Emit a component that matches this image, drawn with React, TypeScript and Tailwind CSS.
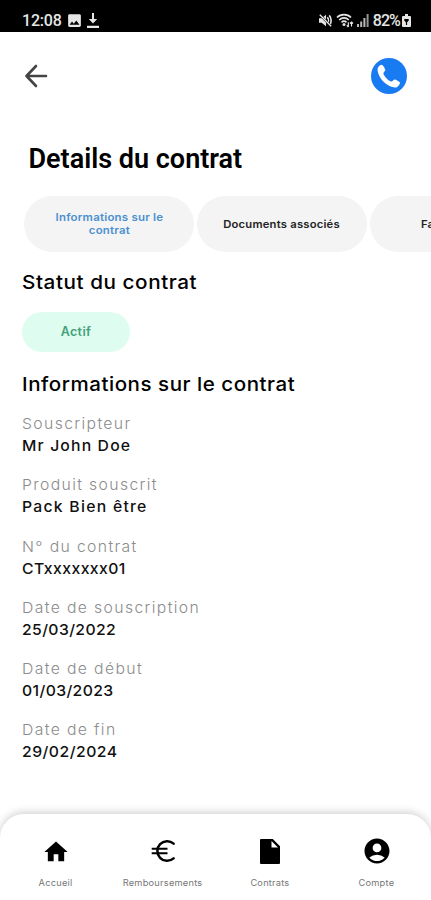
import React from 'react';
import {
  MdAccountCircle,
  MdHome,
  MdImage,
} from 'react-icons/md';

const details = [
  { label: 'Souscripteur', value: 'Mr John Doe', spacing: 'tracking-[1.1px]' },
  { label: 'Produit souscrit', value: 'Pack Bien être', spacing: 'tracking-[1.2px]' },
  { label: 'N° du contrat', value: 'CTxxxxxxx01', spacing: 'tracking-[0.4px]' },
  { label: 'Date de souscription', value: '25/03/2022', spacing: 'tracking-[0.35px]' },
  { label: 'Date de début', value: '01/03/2023', spacing: 'tracking-[0.35px]' },
  { label: 'Date de fin', value: '29/02/2024', spacing: 'tracking-[0.45px]' },
];

const EuroIcon: React.FC = () => (
  <svg width="24" height="24" viewBox="0 0 24 24" fill="none" stroke="currentColor" strokeWidth="2.5">
    <path d="M22.6 4.6A9.8 9.8 0 1 0 22.6 19.4" strokeLinecap="round" />
    <path d="M.7 9.800H16.500M.7 14.300H16.500" strokeWidth="2.1" />
  </svg>
);

const DocumentIcon: React.FC = () => (
  <svg width="20" height="25" viewBox="0 0 20 25" fill="currentColor">
    <path fillRule="evenodd" d="M1 0h11.800L20 7.200V24a1 1 0 0 1-1 1H1a1 1 0 0 1-1-1V1a1 1 0 0 1 1-1zM11.500 2v6.600H18z" />
  </svg>
);

const navItems = [
  { name: 'Accueil', icon: <MdHome size={28} className="mt-[2px]" /> },
  { name: 'Remboursements', icon: <EuroIcon /> },
  { name: 'Contrats', icon: <DocumentIcon /> },
  { name: 'Compte', icon: <MdAccountCircle size={30} /> },
];

const MutedIcon: React.FC = () => (
  <svg width="13" height="13" viewBox="0 0 13 13" fill="currentColor" className="mr-[4px]">
    <path d="M0 4.200h2.600L7 .8v11.400L2.600 8.800H0z" />
    <path d="M8.300 3.200c1.600 1.800 1.600 4.800 0 6.600M10.200 1.400c2.600 2.800 2.600 7.400 0 10.200" fill="none" stroke="currentColor" strokeWidth="1.6" />
    <path d="M.8.8l11.400 11.400" stroke="#000" strokeWidth="2.2" />
    <path d="M.8.8l11.400 11.400" stroke="currentColor" strokeWidth="1.3" />
  </svg>
);

const WifiIcon: React.FC = () => (
  <svg width="18" height="15" viewBox="0 0 18 15" fill="none" stroke="currentColor" strokeWidth="1.6">
    <path d="M1 4.500C4.500.6 11.500.6 15 4.500M3.200 7c2.800-2.800 6.800-2.800 9.600 0M5.500 9.300c1.500-1.400 3.500-1.400 5 0" />
    <circle cx="8" cy="11.500" r="1.500" fill="currentColor" stroke="none" />
    <path d="M12.300 14V9.200M10.800 12.300l1.500 1.700M15.500 13.500V9M14 10.500L15.500 9l1.500 1.500" strokeWidth="1.200" />
  </svg>
);

const SignalIcon: React.FC = () => (
  <svg width="12" height="13" viewBox="0 0 12 13" fill="currentColor">
    <path d="M0 10h2v3H0zM3.200 7.500h2V13h-2zM6.400 4h2v9h-2z" opacity=".8" />
    <path d="M9.600 0h2v13h-2z" opacity=".65" />
  </svg>
);

const BatteryIcon: React.FC = () => (
  <svg width="9" height="13" viewBox="0 0 9 13" fill="currentColor">
    <path fillRule="evenodd" d="M3 0h3v2h2a1 1 0 0 1 1 1v9a1 1 0 0 1-1 1H1a1 1 0 0 1-1-1V3a1 1 0 0 1 1-1h2zM2.300 5v1.700l1.600 1.500V11h1.200V8.200l1.600-1.500V5z" />
  </svg>
);

const StatusBar: React.FC = () => (
  <div className="flex h-8 items-start justify-between bg-black pl-[22px] pr-5 pt-[11px] text-[#e6e6e6]">
    <div className="flex h-[19px] items-center font-[Roboto,sans-serif] text-[16px] font-medium">
      <span className="w-[44px] whitespace-nowrap tracking-[-0.2px]">12:08</span>
      <MdImage size={17} />
      <svg width="12" height="15" viewBox="0 0 12 15" className="ml-[4px]" fill="currentColor">
        <path d="M5 0h2v6h3.200L6 10.500 1.800 6H5zM0 12.800h12V15H0z" />
      </svg>
    </div>
    <div className="flex h-[19px] items-center font-[Roboto,sans-serif] text-[16px] font-medium">
      <MutedIcon />
      <WifiIcon />
      <span className="ml-[3px] mr-[4px]"><SignalIcon /></span>
      <span className="mr-[2px] tracking-[-0.9px]">82%</span>
      <BatteryIcon />
    </div>
  </div>
);

const Tabs: React.FC = () => (
  <div className="mt-[21px] flex gap-[3px] overflow-hidden pl-6 text-[10.5px] font-semibold leading-[13px] text-[#222]">
    <button className="h-[56px] w-[170px] shrink-0 rounded-[28px] bg-[#f4f4f4] text-center text-[#4a90d0]">
      <span className="inline-block scale-x-[1.09] tracking-[0.2px]">
        Informations sur le
        <br />
        contrat
      </span>
    </button>
    <button className="h-[56px] w-[170px] shrink-0 rounded-[28px] bg-[#f4f4f4]">
      <span className="inline-block scale-x-[1.07] tracking-[0.2px]">Documents associés</span>
    </button>
    <button className="h-[56px] w-[170px] shrink-0 rounded-[28px] bg-[#f4f4f4] pl-[51px] text-left">
      <span className="inline-block origin-left scale-x-[1.07] tracking-[0.2px]">Factures</span>
    </button>
  </div>
);

const App: React.FC = () => {
  return (
    <div className="flex h-[900px] w-[431px] flex-col overflow-hidden bg-white font-[Inter,'Open_Sans',sans-serif] text-black">
      <StatusBar />

      <header className="flex h-[88px] items-center justify-between pl-[20px] pr-6 text-[#444]">
        <svg width="30" height="30" viewBox="0 0 30 30" fill="none" stroke="currentColor" strokeWidth="2.6" strokeLinecap="round" strokeLinejoin="round">
          <path d="M26 15H6.500M16 5L6.500 15l9.500 10" />
        </svg>
        <svg width="36" height="36" viewBox="0 0 36 36">
          <circle cx="18" cy="18" r="18" fill="#187bf2" />
          <path
            d="M7.200 9.200c1.200-1.600 3-2.500 4-2.300.8.2 2.900 3.700 3.100 4.900.2 1.300-2 2.200-1.900 3.700.2 2.300 4.900 7.300 7.500 8 1.600.4 2.500-1.900 3.800-1.900 1.300.1 4.900 2.100 5.200 3 .3 1-1 3.300-2.700 4.300-2.600 1.500-8.800-.3-13.400-4.900C8.200 19.400 5.200 12.200 7.200 9.200z"
            fill="#fff"
          />
        </svg>
      </header>

      <h1 className="mt-[23px] pl-[28.5px] font-[Roboto,sans-serif] text-[27px] font-semibold leading-8">
        Details du contrat
      </h1>

      <Tabs />

      <main className="flex-1 pl-[22px]">
        <h2 className="mt-[19px] origin-left scale-x-[1.09] text-[19px] font-medium leading-6 tracking-[0.5px]">Statut du contrat</h2>
        <div className="mt-[17px] flex h-10 w-[108px] items-center justify-center rounded-[20px] bg-[#defdf0] pt-px text-[12.5px] font-semibold tracking-[0.4px] text-[#43a07a]">
          Actif
        </div>
        <h2 className="mt-[21px] origin-left scale-x-[1.08] text-[19px] font-medium leading-6 tracking-[0.5px]">
          Informations sur le contrat
        </h2>

        <dl className="mt-[16px] flex origin-left scale-x-[1.05] flex-col gap-[17.3px]">
          {details.map((item) => (
            <div key={item.label} className="text-[15px] leading-[22px]">
              <dt className="font-light tracking-[1.3px] text-[#8c8c8c]">{item.label}</dt>
              <dd className={`font-medium text-[#111] ${item.spacing}`}>{item.value}</dd>
            </div>
          ))}
        </dl>
      </main>

      {/* Bottom navigation */}
      <nav className="flex h-[86px] justify-between rounded-t-[24px] bg-white pl-[2px] pr-px pt-[22px] shadow-[0_-2px_8px_rgba(0,0,0,0.18)]">
        {navItems.map((item) => (
          <a key={item.name} href="#" className="flex w-[107px] flex-col items-center">
            <span className="flex h-[30px] items-center">{item.icon}</span>
            <span className="mt-[11px] scale-x-[1.09] text-[8.5px] leading-3 tracking-[0.2px] text-[#777]">{item.name}</span>
          </a>
        ))}
      </nav>
    </div>
  );
};

export default App;
